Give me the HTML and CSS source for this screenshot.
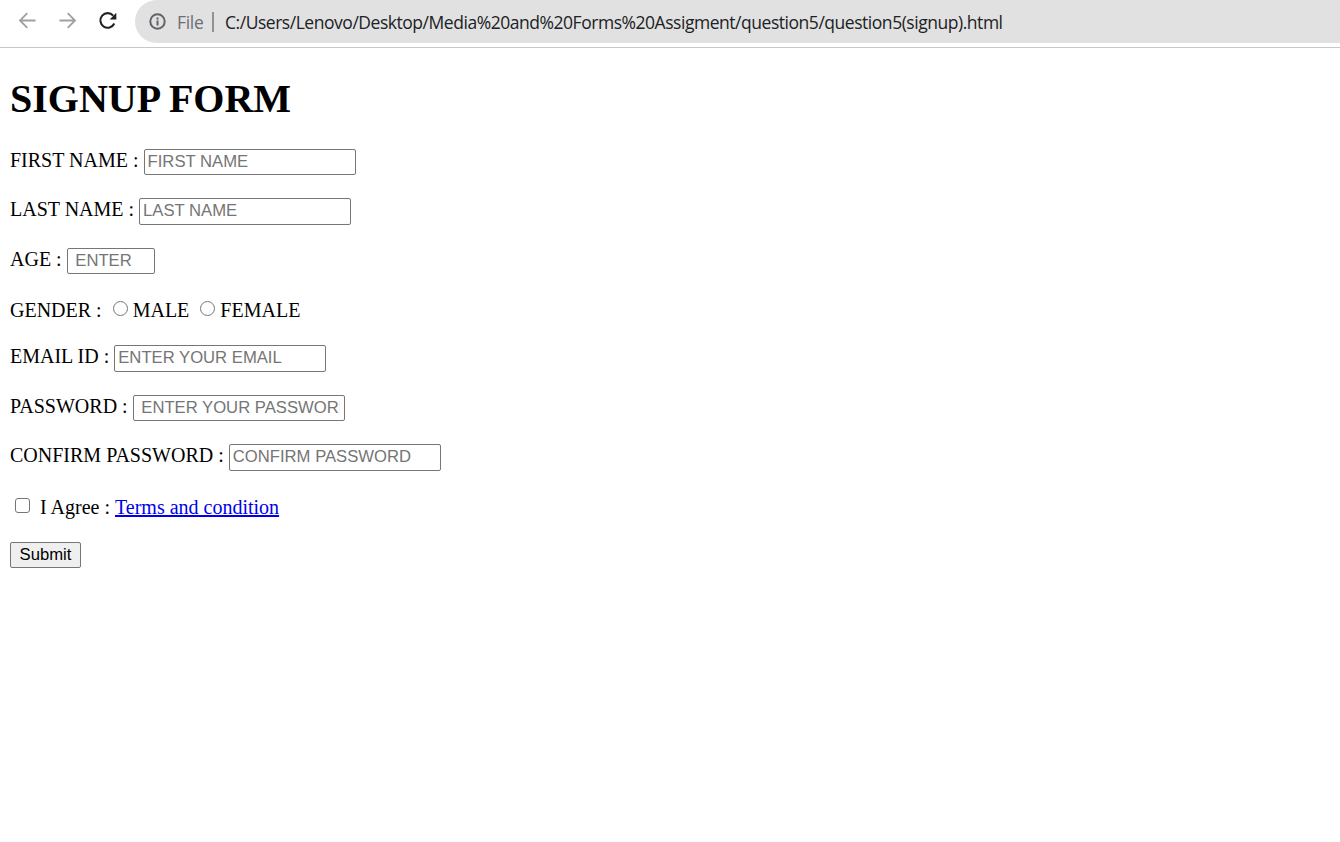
FILE: index.html
```
<!DOCTYPE html>
<html lang="en">
<head>
<meta charset="utf-8">
<title>Signup Form</title>
<link rel="stylesheet" href="styles.css">
</head>
<body>
<header class="toolbar">
  <svg class="nav-icon" viewBox="0 0 20 20"><path d="M18.5 10.5H3M10.3 3.2L3 10.5l7.3 7.3"/></svg>
  <svg class="nav-icon" viewBox="0 0 20 20"><path d="M2.5 10.5H18M10.7 3.2L18 10.5l-7.3 7.3"/></svg>
  <svg class="nav-icon reload" viewBox="0 0 20 20"><path d="M17.3 13.5A7.3 7.3 0 1 1 16.2 5.6"/><path class="solid" d="M19.3 2.8V9.4H12.7z"/></svg>
  <div class="address">
    <svg class="info" viewBox="0 0 18 18"><circle cx="8.5" cy="8.5" r="7.2"/><path d="M8.5 7.5v5M8.5 4.5v2"/></svg>
    <span class="scheme">File</span>
    <span class="divider"></span>
    <span class="url">C:/Users/Lenovo/Desktop/Media%20and%20Forms%20Assigment/question5/question5(signup).html</span>
  </div>
</header>
<main class="page">
  <h1 class="title">SIGNUP FORM</h1>
  <form class="form">
    <div class="row"><label for="first">FIRST NAME :</label><input class="field" id="first" type="text" placeholder="FIRST NAME"></div>
    <div class="row"><label for="last">LAST NAME :</label><input class="field tall" id="last" type="text" placeholder="LAST NAME"></div>
    <div class="row"><label for="age">AGE :</label><input class="field age" id="age" type="text" placeholder=" ENTER"></div>
    <div class="row"><span>GENDER :</span><input class="radio" id="male" type="radio" name="gender"><label for="male">MALE</label><input class="radio" id="female" type="radio" name="gender"><label for="female">FEMALE</label></div>
    <div class="row"><label for="email">EMAIL ID :</label><input class="field tall" id="email" type="text" placeholder="ENTER YOUR EMAIL"></div>
    <div class="row"><label for="password">PASSWORD :</label><input class="field" id="password" type="password" placeholder=" ENTER YOUR PASSWORD"></div>
    <div class="row"><label for="confirm">CONFIRM PASSWORD :</label><input class="field tall" id="confirm" type="password" placeholder="CONFIRM PASSWORD"></div>
    <div class="row"><input class="check" id="agree" type="checkbox"><label for="agree">I Agree :</label><a class="terms" href="#">Terms and condition</a></div>
    <div class="row"><button class="submit" type="button">Submit</button></div>
  </form>
</main>
</body>
</html>
```
FILE: styles.css
```
* { box-sizing: border-box; }
body {
  margin: 0;
  background: #fff;
  color: #000;
  font: 20px/22px "Liberation Serif", "Times New Roman", serif;
}
.toolbar {
  display: flex;
  align-items: flex-start;
  height: 48px;
  padding-left: 17px;
  border-bottom: 1px solid #c8c8c8;
  overflow: hidden;
}
.nav-icon {
  flex: none;
  width: 20px;
  height: 20px;
  margin: 10px 20px 0 0;
  fill: none;
  stroke: #a0a0a0;
  stroke-width: 1.8;
}
.reload { margin-right: 18px; stroke: #202124; stroke-width: 2.1; }
.reload .solid { fill: #202124; stroke: none; }
.address {
  display: flex;
  flex: 1;
  align-items: center;
  height: 43px;
  padding-left: 14px;
  border-radius: 22px 0 0 22px;
  background: #e1e1e1;
  font: 17.5px/24px "Open Sans", "Noto Sans", sans-serif;
  white-space: nowrap;
}
.info { width: 18px; height: 18px; fill: none; stroke: #5f6368; stroke-width: 2; }
.scheme { width: 27px; margin-left: 10px; color: #6b6f74; letter-spacing: -0.3px; }
.divider { width: 2px; height: 20px; margin: 0 11px 0 8px; background: #909396; }
.url { color: #202124; letter-spacing: -0.465px; }
.page { padding: 28px 10px 0; }
.title { margin: 0; font-size: 40px; line-height: 46px; height: 73px; }
.form {
  display: grid;
  grid-template-rows: 49px 50px 51px 46px 50px 49px 52px 46px 27px;
}
.row { display: flex; align-items: flex-start; white-space: nowrap; }
.field {
  width: 212px;
  height: 26px;
  margin: 0 0 0 5px;
  padding: 0 4px 1px 3px;
  border: 1px solid #767676;
  border-radius: 2px;
  background: #fff;
  font: 16.67px "Liberation Sans", Arial, sans-serif;
}
.field::placeholder { color: #757575; opacity: 1; }
.tall { height: 27px; padding-bottom: 2px; }
.age { width: 88px; }
.radio, .check { flex: none; width: 15px; height: 15px; appearance: none; border: 1px solid #767676; background: #fff; }
.radio { margin: 2px 5px 0 11px; border-radius: 50%; }
.check { margin: 2px 10px 0 5px; border-radius: 3px; }
.terms { margin-left: 5px; color: #0000ee; text-decoration: underline; }
.submit {
  width: 71px;
  height: 26px;
  padding: 0 0 1px;
  border: 1px solid #767676;
  border-radius: 2px;
  background: #efefef;
  color: #000;
  font: 16.67px "Liberation Sans", Arial, sans-serif;
}
```
